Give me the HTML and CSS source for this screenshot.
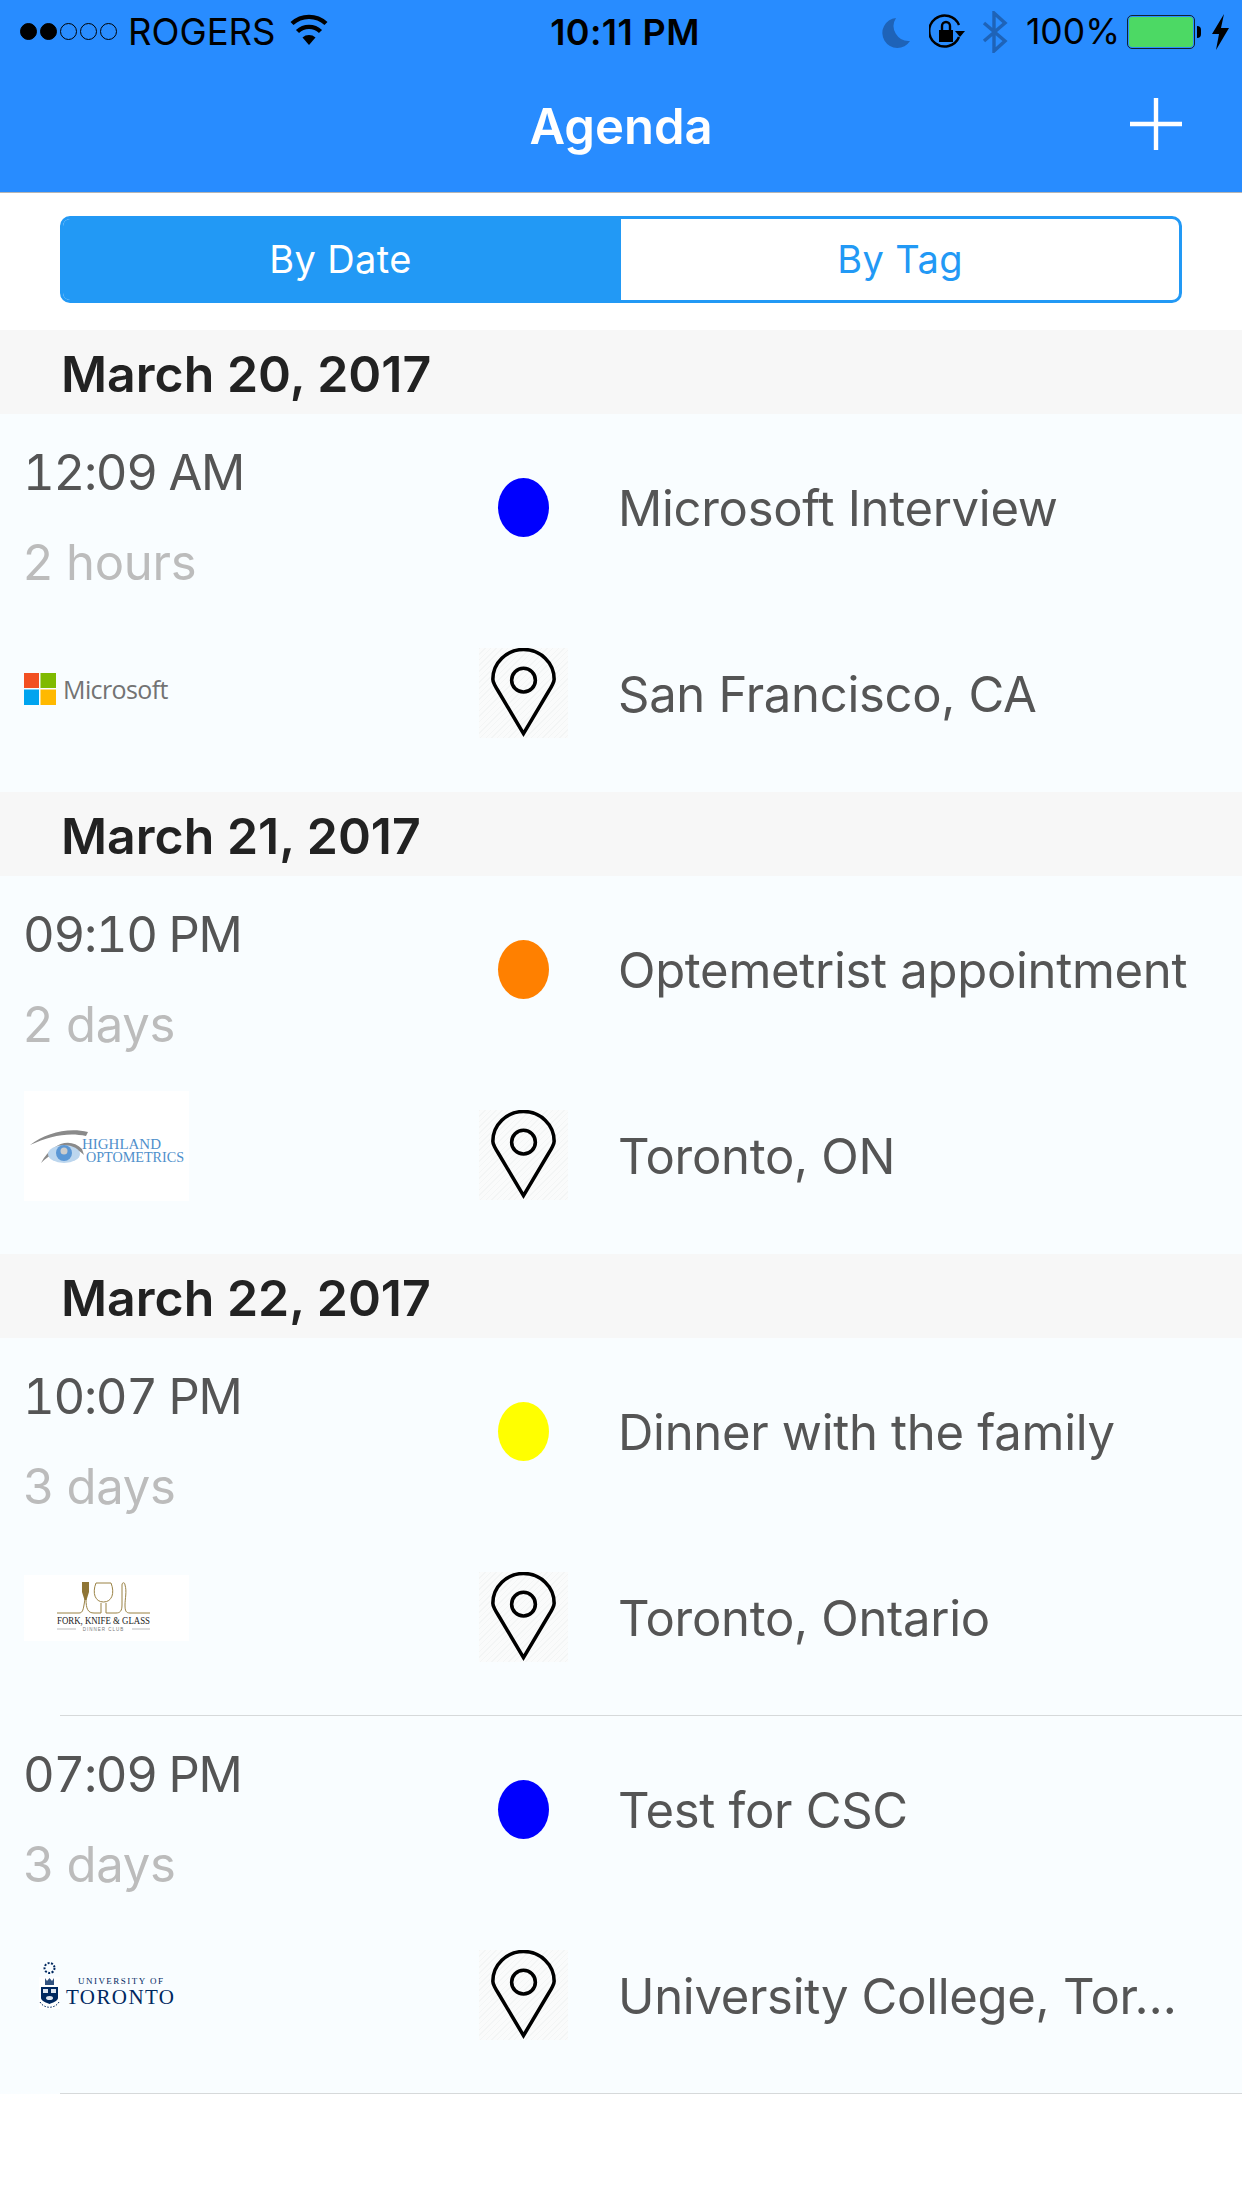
FILE: index.html
```html
<!DOCTYPE html>
<html lang="en">
<head>
<meta charset="utf-8">
<title>Agenda</title>
<link rel="stylesheet" href="styles.css">
</head>
<body>
<svg class="defs" width="0" height="0" aria-hidden="true">
  <symbol id="pin" viewBox="0 0 90 90">
    <path d="M45 86 L20 44 C15 36 14 32 14 31 A31 30 0 1 1 76 31 C76 32 75 36 70 44 Z" fill="none" stroke="#000" stroke-width="3.6" stroke-linejoin="miter"/>
    <circle cx="45" cy="32" r="12" fill="none" stroke="#000" stroke-width="3.6"/>
  </symbol>
</svg>

<header class="topbar">
  <div class="status">
    <div class="status-left">
      <span class="signal"><i class="on"></i><i class="on"></i><i></i><i></i><i></i></span>
      <span class="carrier">ROGERS</span>
      <svg class="wifi" width="38" height="32" viewBox="0 0 38 32">
        <path d="M19 31 L12.5 23.5 A10 10 0 0 1 25.5 23.5 Z" fill="#000"/>
        <path d="M7.5 17.5 A16.5 16.5 0 0 1 30.5 17.5 M2 9.5 A25 25 0 0 1 36 9.5" fill="none" stroke="#000" stroke-width="4.4"/>
      </svg>
    </div>
    <div class="clock">10:11 PM</div>
    <div class="status-right">
      <svg class="moon" width="28" height="32" viewBox="0 0 28 32"><path d="M14 2 A15 15 0 1 0 28 25 A15 15 0 0 1 14 2 Z" fill="#1e63b8"/></svg>
      <svg class="lock" width="36" height="36" viewBox="0 0 36 36">
        <path d="M30 23 A15.5 15.5 0 1 1 30 11" fill="none" stroke="#000" stroke-width="2.4"/>
        <path d="M26 17 L36 17 L31 23 Z" fill="#000"/>
        <rect x="10" y="16" width="14" height="12" fill="#000"/>
        <path d="M13 16 V12 A4 4 0 0 1 21 12 V16" fill="none" stroke="#000" stroke-width="2.4"/>
      </svg>
      <svg class="bt" width="26" height="42" viewBox="0 0 26 42"><path d="M2 12 L23 30 L12 40 V2 L23 12 L2 30" fill="none" stroke="#1e63b8" stroke-width="3.4"/></svg>
      <span class="battery-pct">100%</span>
      <span class="battery"><span class="battery-fill"></span></span>
      <span class="battery-nub"></span>
      <svg class="bolt" width="17" height="36" viewBox="0 0 17 36"><path d="M12 0 L0 20 H7 L4 36 L17 14 H9 Z" fill="#000"/></svg>
    </div>
  </div>
  <div class="navbar">
    <h1 class="title">Agenda</h1>
    <svg class="plus" width="52" height="52" viewBox="0 0 52 52"><path d="M26 0 V52 M0 26 H52" stroke="#fff" stroke-width="4.4"/></svg>
  </div>
</header>

<div class="segment-wrap">
  <div class="segment">
    <div class="seg seg-active">By Date</div>
    <div class="seg">By Tag</div>
  </div>
</div>

<main>
  <h2 class="day">March 20, 2017</h2>
  <article class="event">
    <div class="when"><div class="time">12:09 AM</div><div class="dur">2 hours</div></div>
    <div class="dot-cell"><span class="dot dot-blue"></span></div>
    <div class="name">Microsoft Interview</div>
    <div class="logo-cell logo-cell-ms">
      <div class="ms">
        <svg width="32" height="32" viewBox="0 0 32 32">
          <rect width="15" height="15" fill="#f25022"/><rect x="16.5" width="15.5" height="15" fill="#7fba00"/>
          <rect y="16.5" width="15" height="15.5" fill="#00a4ef"/><rect x="16.5" y="16.5" width="15.5" height="15.5" fill="#ffb900"/>
        </svg>
        <span class="ms-text">Microsoft</span>
      </div>
    </div>
    <div class="pin-cell"><svg class="pin" width="90" height="90"><use href="#pin"/></svg></div>
    <div class="place">San Francisco, CA</div>
  </article>

  <h2 class="day">March 21, 2017</h2>
  <article class="event">
    <div class="when"><div class="time">09:10 PM</div><div class="dur">2 days</div></div>
    <div class="dot-cell"><span class="dot dot-orange"></span></div>
    <div class="name">Optemetrist appointment</div>
    <div class="logo-cell">
      <svg class="logo-box" width="165" height="110" viewBox="0 0 165 110">
        <path d="M6 54 C22 42 44 36 64 41 L62 45 C44 41 26 45 6 54 Z" fill="#8a8a8a"/>
        <path d="M17 72 C28 52 46 46 58 58 L60 64 C48 52 32 58 17 72 Z" fill="#8a8a8a"/>
        <ellipse cx="40" cy="63" rx="16" ry="9" fill="#bcd6ee"/>
        <circle cx="40" cy="62" r="8" fill="#5b97d5"/>
        <circle cx="40" cy="60" r="3.5" fill="#ccc"/>
        <text x="58" y="58" class="hl-text" textLength="79" lengthAdjust="spacingAndGlyphs">HIGHLAND</text>
        <text x="62" y="71" class="hl-text" textLength="98" lengthAdjust="spacingAndGlyphs">OPTOMETRICS</text>
      </svg>
    </div>
    <div class="pin-cell"><svg class="pin" width="90" height="90"><use href="#pin"/></svg></div>
    <div class="place">Toronto, ON</div>
  </article>

  <h2 class="day">March 22, 2017</h2>
  <article class="event event-sep">
    <div class="when"><div class="time">10:07 PM</div><div class="dur">3 days</div></div>
    <div class="dot-cell"><span class="dot dot-yellow"></span></div>
    <div class="name">Dinner with the family</div>
    <div class="logo-cell">
      <svg class="logo-box" width="165" height="66" viewBox="0 0 165 66">
        <g fill="none" stroke="#9a8245" stroke-width="1">
          <path d="M33 38 H55 C58 38 59 36 60 30 L61 24"/>
          <path d="M62 24 C62 34 64 38 70 38 H77 V28"/>
          <path d="M72 8 C68 18 71 27 79.5 27 C88 27 91 18 87 8 Z"/>
          <path d="M82 28 V38 H92 C96 38 98 36 98 30 V10 C98 7 101 7 101 10 C103 16 101 24 101 30 C101 36 102 38 106 38 H126"/>
          <path d="M33 54 H52 M108 54 H126" stroke="#bbb"/>
        </g>
        <path d="M58 7 H65 V17 L62.5 25 H60.5 L58 17 Z" fill="#8f7535"/>
        <text x="33" y="49" class="fork-text" textLength="93" lengthAdjust="spacingAndGlyphs">FORK, KNIFE &amp; GLASS</text>
        <text x="79.5" y="56" class="fork-sub">DINNER CLUB</text>
      </svg>
    </div>
    <div class="pin-cell"><svg class="pin" width="90" height="90"><use href="#pin"/></svg></div>
    <div class="place">Toronto, Ontario</div>
  </article>

  <article class="event event-sep">
    <div class="when"><div class="time">07:09 PM</div><div class="dur">3 days</div></div>
    <div class="dot-cell"><span class="dot dot-blue"></span></div>
    <div class="name">Test for CSC</div>
    <div class="logo-cell logo-cell-uot">
      <svg class="logo-uot" width="165" height="60" viewBox="0 0 165 60">
        <rect x="15" y="15" width="21" height="32" fill="#fff"/>
        <circle cx="25.5" cy="6" r="5" fill="none" stroke="#00285f" stroke-width="2" stroke-dasharray="2 1.5"/>
        <path d="M21 16 L23 19 L25.5 16 L28 19 L30 16 V23 H21 Z" fill="#00285f" opacity=".8"/>
        <path d="M17 25 H34 V36 C34 39 28 41 25.5 42 C23 41 17 39 17 36 Z" fill="#00285f"/>
        <rect x="19" y="27" width="5" height="4" fill="#dfe6f0"/><rect x="27" y="27" width="5" height="4" fill="#dfe6f0"/>
        <ellipse cx="25.5" cy="36" rx="3.5" ry="2" fill="#dfe6f0"/>
        <path d="M16 40 C20 47 31 47 35 40" fill="none" stroke="#00285f" stroke-width="1" stroke-dasharray="1.5 1.5"/>
        <text x="54" y="22" class="uot-small" textLength="85" lengthAdjust="spacing">UNIVERSITY OF</text>
        <text x="42" y="42" class="uot-big" textLength="108" lengthAdjust="spacing">TORONTO</text>
      </svg>
    </div>
    <div class="pin-cell"><svg class="pin" width="90" height="90"><use href="#pin"/></svg></div>
    <div class="place">University College, Tor…</div>
  </article>
</main>
</body>
</html>
```

FILE: styles.css
```css
* { box-sizing: border-box; }
html, body { margin: 0; padding: 0; background: #fff; }
body {
  width: 1242px;
  height: 2208px;
  overflow: hidden;
  font-family: Inter, Roboto, "Liberation Sans", sans-serif;
}
.defs { display: block; height: 0; }

.topbar {
  height: 193px;
  background: #288cff;
  border-bottom: 1px solid #b5b5b5;
}
.status {
  height: 60px;
  display: grid;
  grid-template-columns: 1fr auto 1fr;
  align-items: center;
  padding: 3px 13px 0 20px;
  color: #000;
  font-size: 35.5px;
}
.status-left, .status-right { display: flex; align-items: center; }
.status-right { justify-content: flex-end; }
.signal { display: flex; gap: 3px; }
.signal i {
  width: 17px;
  height: 17px;
  border-radius: 50%;
  border: 1.5px solid #000;
}
.signal i.on { background: #000; }
.carrier { margin-left: 11px; font-size: 36.5px; }
.wifi { margin-left: 15px; margin-top: -4px; }
.clock { font-size: 36px; font-weight: 600; margin-left: 1px; letter-spacing: 0.4px; }
.moon { margin-right: 19px; }
.lock { margin-right: 17px; }
.bt { margin-right: 18px; }
.battery-pct { margin-right: 7px; }
.battery {
  width: 68px;
  height: 34px;
  border: 1.5px solid #123;
  border-radius: 5px;
  padding: 1px;
  display: flex;
}
.battery-fill { flex: 1; background: #4cd964; border-radius: 3px; }
.battery-nub { width: 4px; height: 12px; background: #000; border-radius: 0 4px 4px 0; margin: 0 11px 0 2px; }

.navbar {
  height: 132px;
  display: flex;
  align-items: center;
  justify-content: center;
  position: relative;
}
.title {
  margin: 0;
  color: #fff;
  font-size: 49px;
  font-weight: 600;
}
.plus { position: absolute; right: 60px; top: 38px; }

.segment-wrap { padding: 23px 60px 27px 60px; }
.segment {
  display: flex;
  height: 87px;
  border: 3px solid #2299f5;
  border-radius: 10px;
  overflow: hidden;
}
.seg {
  width: 50%;
  flex: none;
  display: flex;
  align-items: center;
  justify-content: center;
  padding-bottom: 2px;
  font-size: 38px;
  letter-spacing: 0.4px;
  color: #2299f5;
}
.seg-active { background: #2299f5; color: #fff; padding-right: 3px; }

.day {
  margin: 0;
  height: 84px;
  padding: 4px 0 0 61px;
  display: flex;
  align-items: center;
  background: #f7f7f7;
  color: #222;
  font-size: 50px;
  font-weight: 600;
}
.event {
  height: 378px;
  background: #f9fdff;
  display: grid;
  grid-template-columns: 455px 89px 1fr;
  grid-template-rows: 186px 186px;
  padding-left: 24px;
  position: relative;
}
.event-sep::after {
  content: "";
  position: absolute;
  left: 60px;
  right: 0;
  bottom: 0;
  height: 1px;
  background: #d6d9da;
}
.when { padding-top: 27px; }
.time { font-size: 49px; line-height: 64px; margin-left: -1px; color: #555; font-variant-numeric: tabular-nums; letter-spacing: -1.3px; }
.dur { font-size: 49px; line-height: 64px; margin: 26px 0 0 -1px; color: #bcbcbc; letter-spacing: -0.3px; }
.dot-cell { display: flex; align-items: center; justify-content: center; }
.dot { width: 51px; height: 59px; border-radius: 50%; }
.dot-blue { background: #0000ff; }
.dot-orange { background: #ff8000; }
.dot-yellow { background: #ffff00; }
.name, .place {
  padding: 3px 0 0 50px;
  font-size: 49px;
  letter-spacing: -0.3px;
  color: #555;
  display: flex;
  align-items: center;
  white-space: nowrap;
}
.logo-cell {
  display: flex;
  align-items: center;
  padding-bottom: 18px;
}
.logo-cell-ms { padding-bottom: 8px; }
.logo-cell-uot { padding-bottom: 6px; }
.logo-box { background: #fff; display: block; }
.logo-uot { display: block; }
.pin-cell { display: flex; align-items: center; }
.pin {
  display: block;
  background-color: #fafbfb;
  background-image: repeating-linear-gradient(135deg, #f3f5f5 0 1px, transparent 1px 4px);
}
.ms { display: flex; align-items: center; gap: 7px; }
.ms-text { font-family: "Open Sans", sans-serif; font-size: 25px; color: #737373; letter-spacing: -0.6px; }
.hl-text { font-family: "Liberation Serif", serif; font-size: 14px; fill: #4f8fcb; }
.fork-text { font-family: "Liberation Serif", serif; font-size: 9.5px; fill: #222; }
.fork-sub { font-family: "Liberation Sans", sans-serif; font-size: 4.5px; letter-spacing: 1px; fill: #777; text-anchor: middle; }
.uot-small { font-family: "Liberation Serif", serif; font-size: 9px; fill: #00285f; }
.uot-big { font-family: "Liberation Serif", serif; font-size: 21px; fill: #00285f; }
```
